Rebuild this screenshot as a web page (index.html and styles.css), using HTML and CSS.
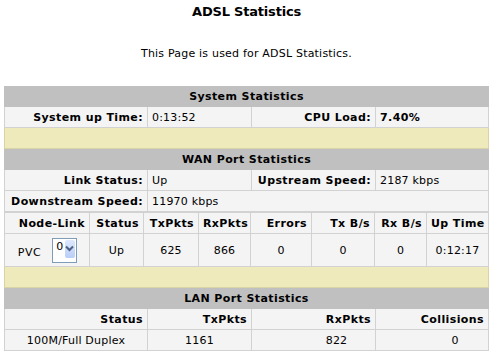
FILE: index.html
```html
<!DOCTYPE html>
<html lang="en">
<head>
  <meta charset="UTF-8" />
  <title>ADSL Statistics</title>
  <link rel="stylesheet" href="styles.css">
</head>
<body>
  <h1 class="title">ADSL Statistics</h1>
  <p class="intro">This Page is used for ADSL Statistics.</p>

  <div class="stats">
    <!-- System -->
    <table class="grid">
      <colgroup><col style="width:143px"><col style="width:104px"><col style="width:124px"><col></colgroup>
      <tr class="head"><td colspan="4">System Statistics</td></tr>
      <tr class="row">
        <td class="label">System up Time:</td>
        <td>0:13:52</td>
        <td class="label">CPU Load:</td>
        <td class="strong">7.40%</td>
      </tr>
      <tr class="spacer"><td colspan="4"></td></tr>
    </table>

    <!-- WAN -->
    <table class="grid">
      <colgroup><col style="width:143px"><col style="width:104px"><col style="width:124px"><col></colgroup>
      <tr class="head"><td colspan="4">WAN Port Statistics</td></tr>
      <tr class="row">
        <td class="label">Link Status:</td>
        <td>Up</td>
        <td class="label">Upstream Speed:</td>
        <td>2187 kbps</td>
      </tr>
      <tr class="row">
        <td class="label">Downstream Speed:</td>
        <td colspan="3">11970 kbps</td>
      </tr>
    </table>
    <table class="grid">
      <colgroup><col style="width:85px"><col style="width:54px"><col style="width:55px"><col style="width:52px"><col style="width:61px"><col style="width:63px"><col style="width:52px"><col></colgroup>
      <tr class="row">
        <td class="label">Node-Link</td>
        <td class="label">Status</td>
        <td class="label">TxPkts</td>
        <td class="label">RxPkts</td>
        <td class="label">Errors</td>
        <td class="label">Tx B/s</td>
        <td class="label">Rx B/s</td>
        <td class="label">Up Time</td>
      </tr>
      <tr class="row tall">
        <td class="center">
          <span class="pvc"><span class="pvc-text">PVC</span>
            <span class="select"><span class="val">0</span><span class="arrow"><svg width="9" height="7" viewBox="0 0 9 7"><path d="M1 1.5 L4.5 5 L8 1.5" fill="none" stroke="#4d6185" stroke-width="2"/></svg></span></span>
          </span>
        </td>
        <td class="center">Up</td>
        <td class="center">625</td>
        <td class="center">866</td>
        <td class="center">0</td>
        <td class="center">0</td>
        <td class="center">0</td>
        <td class="center">0:12:17</td>
      </tr>
      <tr class="spacer"><td colspan="8"></td></tr>
    </table>

    <!-- LAN -->
    <table class="grid">
      <colgroup><col style="width:143px"><col style="width:104px"><col style="width:124px"><col></colgroup>
      <tr class="head"><td colspan="4">LAN Port Statistics</td></tr>
      <tr class="row">
        <td class="label">Status</td>
        <td class="label">TxPkts</td>
        <td class="label">RxPkts</td>
        <td class="label">Collisions</td>
      </tr>
      <tr class="row">
        <td class="center">100M/Full Duplex</td>
        <td class="center">1161</td>
        <td class="center shift">822</td>
        <td class="center shift">0</td>
      </tr>
    </table>
  </div>
</body>
</html>
```
FILE: styles.css
```css
* {
  box-sizing: border-box;
}
body {
  margin: 0;
  font-family: "DejaVu Sans", Verdana, sans-serif;
  font-size: 11px;
  letter-spacing: 0.2px;
  color: #000;
  background: #fff;
}
.title {
  margin: 0;
  padding-top: 4px;
  font-size: 13px;
  line-height: 16px;
  letter-spacing: -0.2px;
  text-align: center;
}
.intro {
  margin: 0;
  padding-top: 27px;
  font-size: 11px;
  line-height: 14px;
  text-align: center;
}
.stats {
  width: 485px;
  margin: 25px auto 0;
}
.grid {
  width: 100%;
  table-layout: fixed;
  border-collapse: collapse;
}
.grid td {
  padding: 0 4px;
  white-space: nowrap;
  vertical-align: middle;
}
.head td {
  height: 20px;
  background: #c0c0c0;
  font-weight: bold;
  letter-spacing: 0.4px;
  text-align: center;
  border: 1px solid #c0c0c0;
}
.row td {
  height: 21px;
  background: #f4f4f4;
  border: 1px solid #d2d2d2;
}
.row.tall td {
  height: 33px;
}
.spacer td {
  height: 21px;
  background: #eeeabb;
  border: 1px solid #d8d4a8;
}
.label {
  font-weight: bold;
  text-align: right;
  letter-spacing: 0.4px;
}
.strong {
  font-weight: bold;
  letter-spacing: 0.4px;
}
.center {
  text-align: center;
}
.grid td.shift {
  padding-left: 50px;
}
.pvc {
  display: inline-flex;
  align-items: center;
  gap: 11px;
  padding-left: 1px;
}
.pvc-text {
  padding-top: 5px;
  letter-spacing: 0.6px;
}
.select {
  display: inline-flex;
  align-items: flex-start;
  height: 25px;
  width: 25px;
  border: 1px solid #7f9db9;
  background: #fff;
}
.select .val {
  flex: 1;
  padding: 1px 0 0 3px;
  text-align: left;
}
.select .arrow {
  width: 13px;
  height: 18px;
  margin: 1px;
  border-radius: 2px;
  background: linear-gradient(#dde8fd, #b9cdf7);
  display: flex;
  align-items: center;
  justify-content: center;
}
```
